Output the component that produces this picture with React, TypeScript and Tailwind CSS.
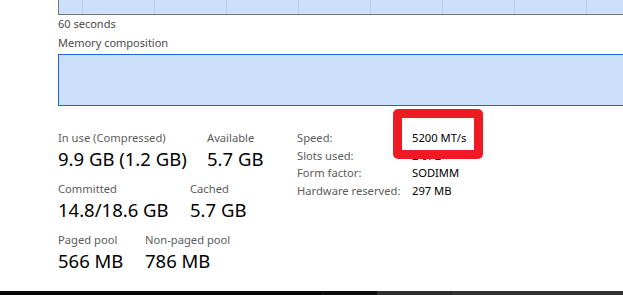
import React from "react";

const font = { fontFamily: '"Segoe UI", "Noto Sans", "Open Sans", sans-serif' };

function Stat({ label, value, w }: { label: string; value: string; w: string }) {
  return (
    <div className={`flex flex-col ${w}`}>
      <div className="text-[11.2px] leading-[16px] text-[#5c5c5c] whitespace-nowrap">{label}</div>
      <div className="text-[18.5px] leading-[26px] text-black whitespace-nowrap">{value}</div>
    </div>
  );
}

export default function App() {
  const lines = [82, 154, 226, 298, 370, 442, 514, 586].map((x) => x - 59);
  return (
    <div className="w-[623px] h-[295px] bg-white relative overflow-hidden flex flex-col" style={font}>
      <div className="ml-[58px] h-[15px] border-l border-b border-[#767676] bg-[#cce0fb] relative">
        <svg className="absolute inset-0" width="565" height="14">
          {lines.map((x) => (
            <line key={x} x1={x + 0.5} y1={0} x2={x + 0.5} y2={14} stroke="#b5cdec" strokeWidth={1} />
          ))}
        </svg>
      </div>
      <div className="ml-[58px] mt-[1px] text-[11px] leading-[16px] text-[#4a4a4a]">60 seconds</div>
      <div className="ml-[58px] mt-[3px] text-[11px] leading-[16px] text-[#4a4a4a]">Memory composition</div>
      <div className="ml-[58px] mt-[3px] h-[52px] border border-r-0 border-[#1a66d6] bg-[#cce0fc]" />
      <div className="flex items-start mt-[24px]">
        <div className="ml-[58px] w-[239px] flex flex-col gap-[9px]">
          <div className="flex">
            <Stat label="In use (Compressed)" value="9.9 GB (1.2 GB)" w="w-[149px]" />
            <Stat label="Available" value="5.7 GB" w="w-[80px]" />
          </div>
          <div className="flex">
            <Stat label="Committed" value="14.8/18.6 GB" w="w-[132px]" />
            <Stat label="Cached" value="5.7 GB" w="w-[80px]" />
          </div>
          <div className="flex">
            <Stat label="Paged pool" value="566 MB" w="w-[87px]" />
            <Stat label="Non-paged pool" value="786 MB" w="w-[100px]" />
          </div>
        </div>
        <div className="-mt-[1px] grid grid-cols-[115px_auto] text-[11.2px] leading-[17.5px]">
          <div className="text-[#5c5c5c]">Speed:</div>
          <div className="text-black">5200 MT/s</div>
          <div className="text-[#5c5c5c]">Slots used:</div>
          <div className="text-black">2 of 2</div>
          <div className="text-[#5c5c5c]">Form factor:</div>
          <div className="text-black">SODIMM</div>
          <div className="text-[#5c5c5c]">Hardware reserved:</div>
          <div className="text-black">297 MB</div>
        </div>
      </div>
      <div className="mt-auto h-[4px] bg-[#080808] flex">
        <div className="ml-[322px] w-[55px] bg-[#0d0d0d] border-l border-[#1a1a1a]" />
        <div className="w-[74px] bg-[#2e2e2e]" />
        <div className="flex-1 bg-[#333333] border-l border-[#262626]" />
      </div>
      <div className="absolute left-[393px] top-[109px] w-[90px] h-[50px] border-[9px] border-[#ed1c24] rounded-[5px]" />
    </div>
  );
}
